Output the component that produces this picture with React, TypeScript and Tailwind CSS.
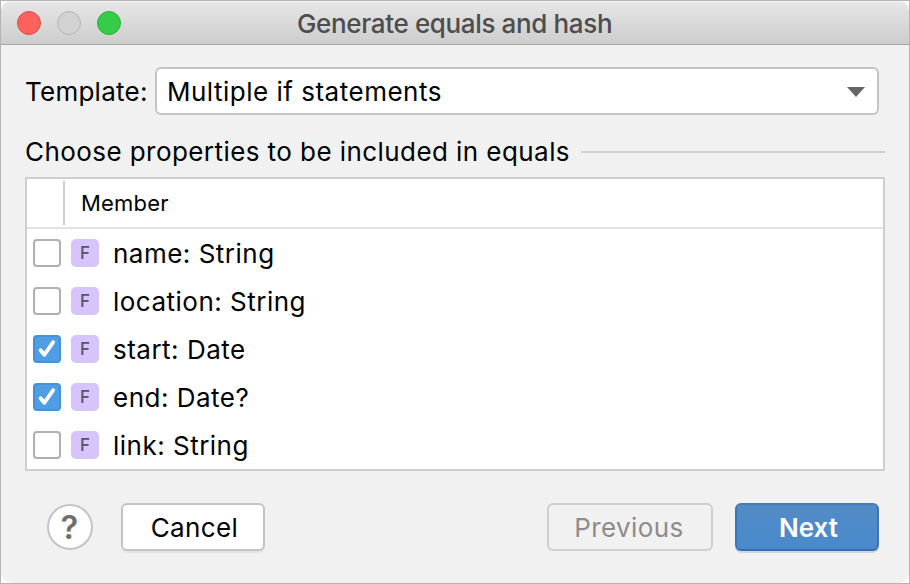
import React from "react";

type Member = { label: string; checked: boolean };

const members: Member[] = [
  { label: "name: String", checked: false },
  { label: "location: String", checked: false },
  { label: "start: Date", checked: true },
  { label: "end: Date?", checked: true },
  { label: "link: String", checked: false },
];

function Checkbox({ checked }: { checked: boolean }) {
  if (!checked) {
    return <span className="size-7 shrink-0 rounded-[4px] border-2 border-[#b0b0b0] bg-white" />;
  }
  return (
    <span className="size-7 shrink-0 rounded-[4px] border-2 border-[#4791d8] bg-[#4f9ee3]">
      <svg viewBox="0 0 24 24" className="block size-6" fill="none" stroke="#fff" strokeWidth="3.8" strokeLinecap="round" strokeLinejoin="round">
        <path d="M5.6 13.2 9.3 17.8 18.2 5.2" />
      </svg>
    </span>
  );
}

function MemberRow({ member }: { member: Member }) {
  return (
    <li className="flex h-12 items-center pl-1.5">
      <Checkbox checked={member.checked} />
      <span className="ml-2.5 flex size-7 shrink-0 items-center justify-center rounded-[5px] bg-[#d6c4fa] text-[17px] leading-none font-medium text-[#5a5268]">
        F
      </span>
      <span className="ml-3.5 whitespace-nowrap pt-0.5 tracking-[0.49px]">{member.label}</span>
    </li>
  );
}

export default function App() {
  return (
    <div className="h-[584px] w-[910px] border border-[#b4b4b4] bg-white font-['Inter','Liberation_Sans',sans-serif] text-[26px] leading-8 text-black">
      <div className="flex h-full flex-col overflow-hidden rounded-[10px] bg-[#f1f1f1]">
        <header className="flex h-11 shrink-0 items-center border-t border-b border-t-[#f4f4f4] border-b-[#a6a6a6] bg-linear-to-b from-[#e6e6e6] to-[#cdcdcd] pl-4">
          <div className="flex w-[280px] shrink-0 gap-4">
            <span className="size-6 rounded-full border border-[#e24c48] bg-[#fd625d]" />
            <span className="size-6 rounded-full border border-[#b3b3b3] bg-[#d2d2d2]" />
            <span className="size-6 rounded-full border border-[#2bad3b] bg-[#35cb4b]" />
          </div>
          <h1 className="whitespace-nowrap pt-0.5 font-[450] tracking-[-0.36px] text-[#4d4d4d]">Generate equals and hash</h1>
        </header>

        <main className="flex flex-1 flex-col pt-[22px] pl-6 pr-6">
          <div className="flex h-12 items-center">
            <label className="w-[130px] shrink-0 whitespace-nowrap pt-0.5 tracking-[0.25px]">Template:</label>
            <div className="flex h-12 w-[724px] items-center justify-between rounded-[6px] border-2 border-[#c4c4c4] bg-white pl-2.5 pr-3">
              <span className="pt-0.5 tracking-[0.5px]">Multiple if statements</span>
              <svg viewBox="0 0 18 10" className="mt-0.5 h-2.5 w-[18px]">
                <path d="M0 0H18L9 10Z" fill="#666" />
              </svg>
            </div>
          </div>

          <div className="mt-5 flex h-[34px] items-center">
            <h2 className="w-[556px] shrink-0 whitespace-nowrap tracking-[0.43px]">Choose properties to be included in equals</h2>
            <div className="h-0.5 flex-1 bg-[#d0d0d0]" />
          </div>

          <section className="mt-2 h-[294px] w-[860px] border-2 border-[#cfcfcf] bg-white">
            <div className="flex h-[50px] items-center border-b-2 border-[#e3e3e3]">
              <div className="h-11 w-[38px] border-r-2 border-[#cfcfcf]" />
              <span className="ml-4 text-[22px] tracking-[0.2px]">Member</span>
            </div>
            <ul>
              {members.map((member) => (
                <MemberRow key={member.label} member={member} />
              ))}
            </ul>
          </section>

          <footer className="mt-8 flex h-12 items-center pl-[22px] pr-1.5">
            <button className="flex size-[46px] items-center justify-center rounded-full border-2 border-[#c4c4c4] bg-white pt-px pr-px text-[32px] font-semibold text-[#6e6e6e]">?</button>
            <button className="ml-7 h-12 w-36 rounded-[6px] border-2 border-[#c4c4c4] bg-white pt-0.5 pl-[3px] tracking-[0.4px] shadow-[0_2px_0_#e4e4e4]">Cancel</button>
            <button className="ml-auto h-12 w-[166px] rounded-[6px] border-2 border-[#cfcfcf] pt-0.5 pr-0.5 tracking-[0.4px] text-[#8c8c8c]">Previous</button>
            <button className="ml-[22px] h-12 w-36 rounded-[6px] border-2 border-t-[#447cb9] border-x-[#3c75b5] border-b-[#346db0] bg-linear-to-b from-[#528cc7] to-[#4989cc] pt-0.5 pl-[3px] font-semibold text-white shadow-[0_2px_0_#d6d6d6]">Next</button>
          </footer>
        </main>
      </div>
    </div>
  );
}
